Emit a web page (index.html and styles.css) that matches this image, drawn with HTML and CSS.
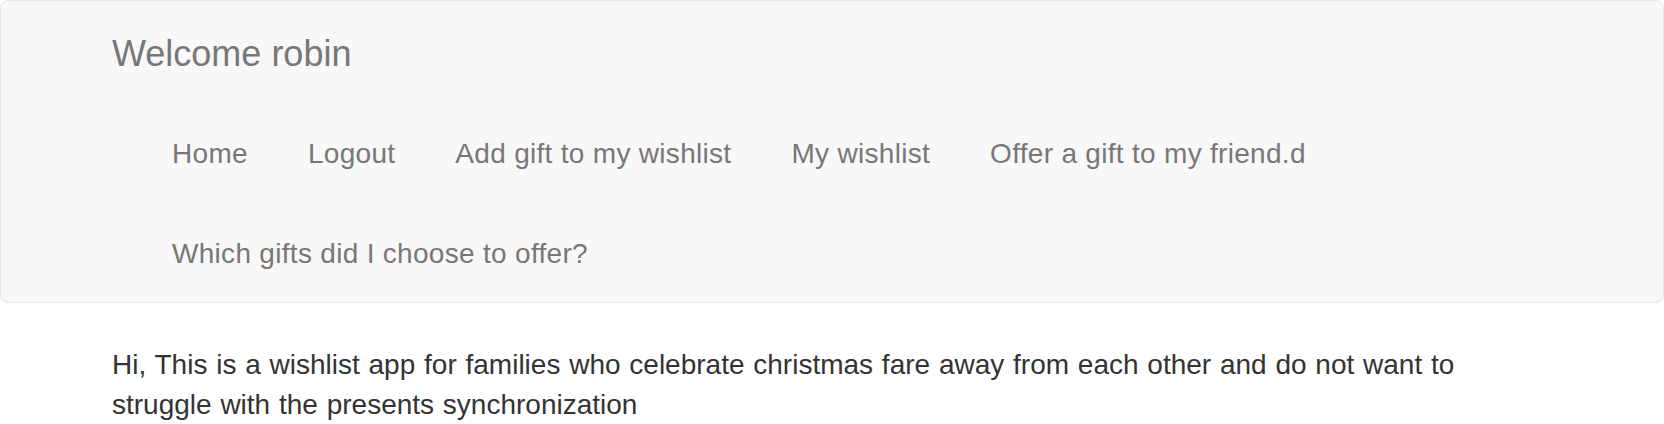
FILE: index.html
```html
<!DOCTYPE html>
<html lang="en">
<head>
<meta charset="utf-8">
<title>Wishlist</title>
<link rel="stylesheet" href="styles.css">
</head>
<body>
<nav class="navbar">
  <div class="container">
    <div class="navbar-header">
      <a class="brand" href="#">Welcome robin</a>
    </div>
    <div class="navbar-collapse">
      <ul class="nav">
        <li><a href="#">Home</a></li>
        <li><a href="#">Logout</a></li>
        <li><a href="#">Add gift to my wishlist</a></li>
        <li><a href="#">My wishlist</a></li>
        <li><a href="#">Offer a gift to my friend.d</a></li>
        <li><a href="#">Which gifts did I choose to offer?</a></li>
      </ul>
    </div>
  </div>
</nav>
<div class="container">
  <p class="intro">Hi, This is a wishlist app for families who celebrate christmas fare away from each other and do not want to struggle with the presents synchronization</p>
</div>
</body>
</html>
```
FILE: styles.css
```css
* { box-sizing: border-box; }
html, body { margin: 0; padding: 0; }
body {
  font-family: "Liberation Sans", Arial, Helvetica, sans-serif;
  font-size: 28px;
  line-height: 40px;
  color: #333;
  background: #fff;
}
.container {
  width: 1500px;
  margin: 0 auto;
  padding: 0 30px;
}
.navbar {
  background: #f8f8f8;
  border: 1px solid #e7e7e7;
  border-radius: 8px;
  margin-bottom: 42px;
}
.brand {
  display: block;
  margin-left: -30px;
  padding: 33px 30px 27px;
  height: 100px;
  font-size: 36px;
  line-height: 40px;
  color: #777;
  text-decoration: none;
}
.navbar-collapse {
  border-top: 1px solid transparent;
  padding: 0 30px;
}
.nav {
  list-style: none;
  margin: 0;
  padding: 0;
  display: flex;
  flex-wrap: wrap;
}
.nav a {
  display: block;
  padding: 32px 30px 28px;
  font-size: 28px;
  line-height: 40px;
  letter-spacing: 0.3px;
  color: #777;
  text-decoration: none;
}
.intro {
  margin: 0;
  max-width: 1380px;
  word-spacing: 1px;
}
```
